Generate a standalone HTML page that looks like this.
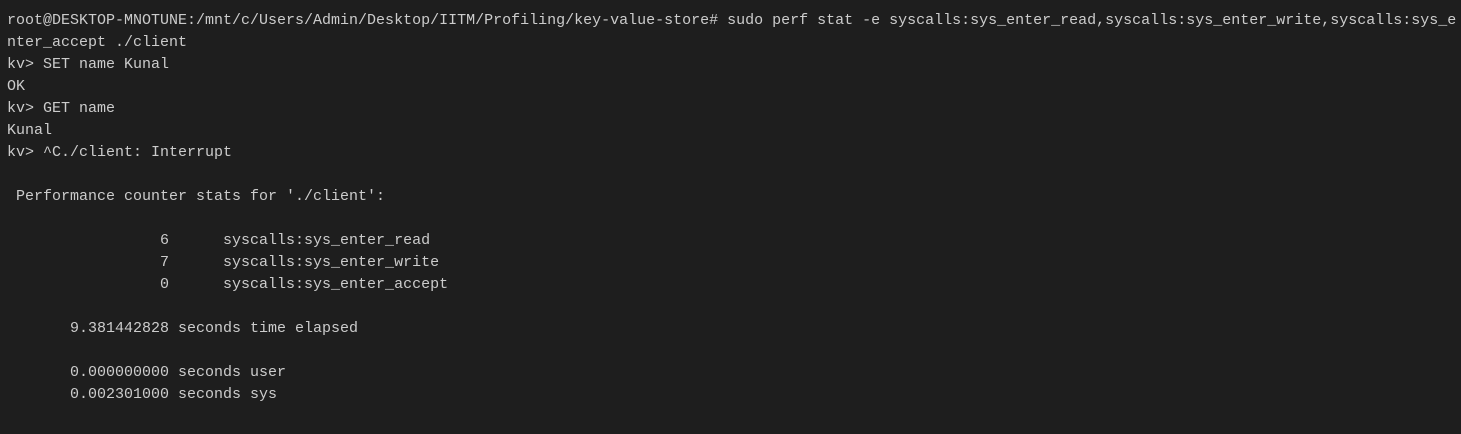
<!DOCTYPE html>
<html><head><meta charset="utf-8"><style>
html,body{margin:0;padding:0;background:#1e1e1e;width:1461px;height:434px;overflow:hidden}
pre{margin:0;position:absolute;left:7px;top:10px;font-family:"Liberation Mono",monospace;font-size:15px;line-height:22px;color:#cccccc;white-space:pre}
</style></head><body><pre>root@DESKTOP-MNOTUNE:/mnt/c/Users/Admin/Desktop/IITM/Profiling/key-value-store# sudo perf stat -e syscalls:sys_enter_read,syscalls:sys_enter_write,syscalls:sys_e
nter_accept ./client
kv&gt; SET name Kunal
OK
kv&gt; GET name
Kunal
kv&gt; ^C./client: Interrupt

 Performance counter stats for './client':

                 6      syscalls:sys_enter_read
                 7      syscalls:sys_enter_write
                 0      syscalls:sys_enter_accept

       9.381442828 seconds time elapsed

       0.000000000 seconds user
       0.002301000 seconds sys
</pre></body></html>
